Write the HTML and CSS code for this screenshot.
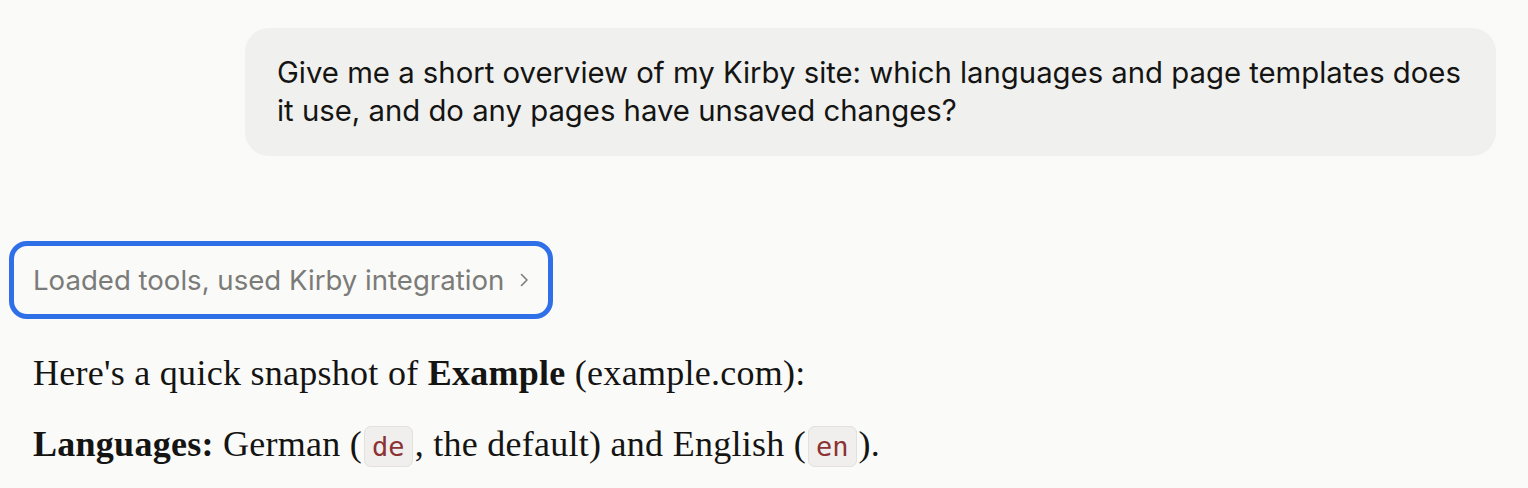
FILE: index.html
```html
<!DOCTYPE html>
<html lang="en">
<head>
<meta charset="utf-8">
<title>Chat</title>
<link rel="stylesheet" href="styles.css">
</head>
<body>
<main class="thread">
  <div class="user-row">
    <div class="user-bubble">Give me a short overview of my Kirby site: which languages and page templates does it use, and do any pages have unsaved changes?</div>
  </div>
  <div class="assistant">
    <button class="tool-chip" type="button">
      <span class="tool-label">Loaded tools, used Kirby integration</span>
      <svg class="chev" width="10" height="16" viewBox="0 0 10 16" aria-hidden="true"><path d="M2.5 2.5 L8 8 L2.5 13.5" fill="none" stroke="#7d7d7a" stroke-width="1.6" stroke-linecap="round" stroke-linejoin="round"/></svg>
    </button>
    <p class="para">Here's a quick snapshot of <strong>Example</strong> (example.com):</p>
    <p class="para"><strong>Languages:</strong> German (<code class="code">de</code>, the default) and English (<code class="code">en</code>).</p>
  </div>
</main>
</body>
</html>
```
FILE: styles.css
```css
* { box-sizing: border-box; }
html, body { margin: 0; padding: 0; background: #fafaf9; }
body { color: #141413; }
.thread {
  padding: 28px 32px 0 33px;
  display: flex;
  flex-direction: column;
}
.user-row {
  display: flex;
  justify-content: flex-end;
}
.user-bubble {
  max-width: 1251px;
  background: #f0f0ee;
  border-radius: 24px;
  padding: 26px 32px;
  font-family: "Inter", "Liberation Sans", sans-serif;
  font-size: 29.3px;
  line-height: 38px;
  color: #141413;
}
.assistant {
  margin-top: 85px;
  display: flex;
  flex-direction: column;
  align-items: flex-start;
}
.tool-chip {
  margin-left: -24px;
  border: 5px solid #2f6fe8;
  border-radius: 18px;
  background: transparent;
  padding: 17px 19px;
  display: flex;
  align-items: center;
  gap: 15px;
  font-family: "Inter", "Liberation Sans", sans-serif;
  font-size: 27.6px;
  line-height: 34px;
  color: #7b7b78;
  cursor: pointer;
}
.chev { display: block; }
.para {
  margin: 0;
  font-family: "Liberation Serif", "Times New Roman", serif;
  font-size: 36px;
  line-height: 48px;
  letter-spacing: 0.27px;
  color: #141413;
}
.tool-chip + .para { margin-top: 30px; }
.para + .para { margin-top: 23px; }
.para strong { font-weight: 700; }
.code {
  font-family: "DejaVu Sans Mono", monospace;
  font-size: 27px;
  letter-spacing: 0;
  color: #8b3232;
  background: #f0efed;
  border: 1px solid #e2e1de;
  border-radius: 7px;
  padding: 4px 7px;
  margin: 0 2px;
}
```
